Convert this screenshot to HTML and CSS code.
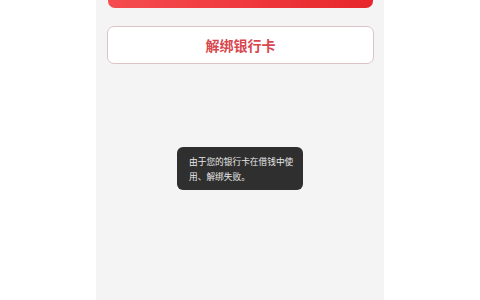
FILE: index.html
```html
<!DOCTYPE html>
<html lang="zh">
<head>
<meta charset="utf-8">
<link rel="stylesheet" href="styles.css">
</head>
<body>
<div class="panel">
  <div class="btn-primary"></div>
  <div class="btn-outline">解绑银行卡</div>
  <div class="toast"><p class="toast-text">由于您的银行卡在借钱中使用、解绑失败。</p></div>
</div>
</body>
</html>
```
FILE: styles.css
```css
html, body {
  margin: 0;
  padding: 0;
  background: #ffffff;
  font-family: "Noto Sans CJK SC", "Noto Sans", sans-serif;
}
.panel {
  position: relative;
  width: 288px;
  height: 300px;
  margin: 0 auto;
  background: #f4f4f4;
  padding: 0 10px 0 11px;
  box-sizing: border-box;
}
.btn-primary {
  height: 8px;
  margin: 0 1px 0 1px;
  border-radius: 0 0 7px 7px;
  background: linear-gradient(90deg, #f44c50 0%, #ef3a3e 50%, #e6262a 100%);
}
.btn-outline {
  margin-top: 18px;
  height: 38px;
  box-sizing: border-box;
  border: 1px solid #dcc3c6;
  border-radius: 7px;
  background: #ffffff;
  display: flex;
  align-items: center;
  justify-content: center;
  color: #d9474f;
  font-size: 14px;
  font-weight: 700;
}
.toast {
  position: absolute;
  left: 81px;
  top: 147px;
  width: 126px;
  height: 43px;
  box-sizing: border-box;
  padding: 7px 8px 5px 12px;
  background: #2f2f2f;
  border-radius: 6px;
}
.toast-text {
  margin: 0;
  width: 106px;
  font-size: 8.7px;
  line-height: 15px;
  color: #e8e8e8;
}
```
